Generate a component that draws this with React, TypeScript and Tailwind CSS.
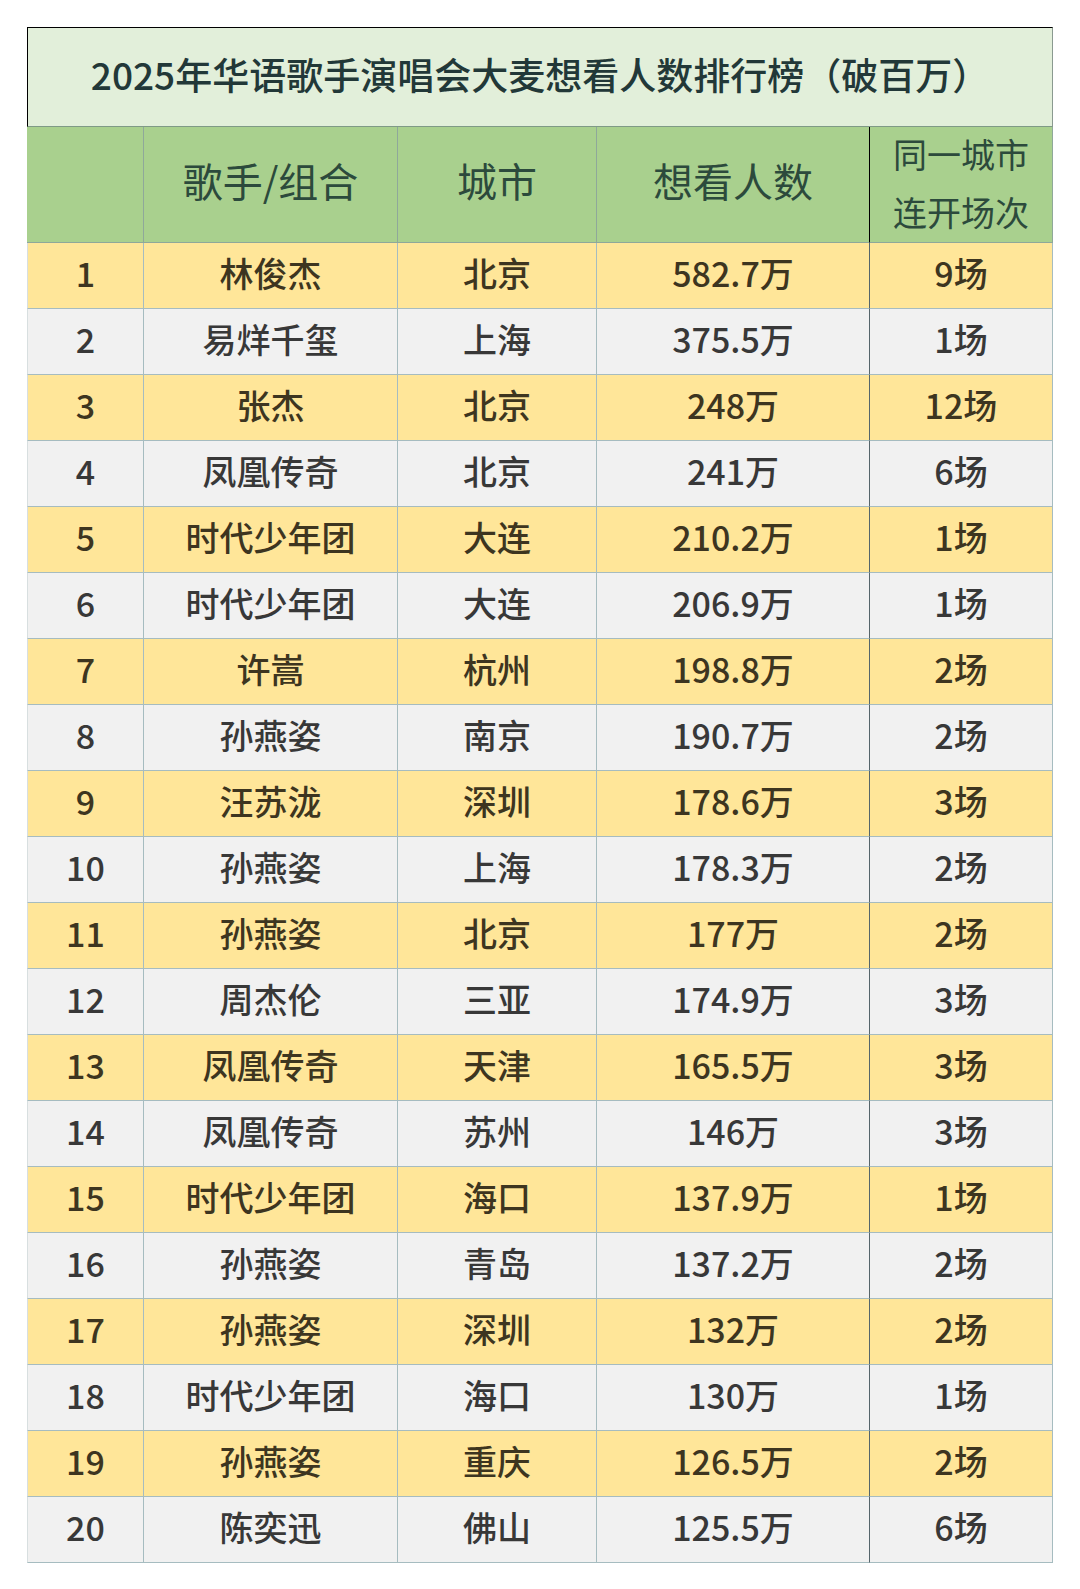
import React from "react";

const rows: [string, string, string, string, string][] = [
  ["1", "林俊杰", "北京", "582.7万", "9场"],
  ["2", "易烊千玺", "上海", "375.5万", "1场"],
  ["3", "张杰", "北京", "248万", "12场"],
  ["4", "凤凰传奇", "北京", "241万", "6场"],
  ["5", "时代少年团", "大连", "210.2万", "1场"],
  ["6", "时代少年团", "大连", "206.9万", "1场"],
  ["7", "许嵩", "杭州", "198.8万", "2场"],
  ["8", "孙燕姿", "南京", "190.7万", "2场"],
  ["9", "汪苏泷", "深圳", "178.6万", "3场"],
  ["10", "孙燕姿", "上海", "178.3万", "2场"],
  ["11", "孙燕姿", "北京", "177万", "2场"],
  ["12", "周杰伦", "三亚", "174.9万", "3场"],
  ["13", "凤凰传奇", "天津", "165.5万", "3场"],
  ["14", "凤凰传奇", "苏州", "146万", "3场"],
  ["15", "时代少年团", "海口", "137.9万", "1场"],
  ["16", "孙燕姿", "青岛", "137.2万", "2场"],
  ["17", "孙燕姿", "深圳", "132万", "2场"],
  ["18", "时代少年团", "海口", "130万", "1场"],
  ["19", "孙燕姿", "重庆", "126.5万", "2场"],
  ["20", "陈奕迅", "佛山", "125.5万", "6场"],
];

const font = { fontFamily: '"Noto Sans CJK SC", "Noto Sans", sans-serif' };

export default function App() {
  return (
    <div className="bg-white min-h-[1589px] pt-[27px] pl-[27px]" style={font}>
      <div className="w-[1026px]">
        <div className="h-[100px] pb-[4px] bg-[#e2efda] border-t border-l border-black border-r border-r-[#8a9a90] border-b border-b-[#7f9a86] flex items-center justify-center text-[37px] font-medium text-[#223838]">
          2025年华语歌手演唱会大麦想看人数排行榜（破百万）
        </div>
        <div className="grid grid-cols-[117px_254px_199px_273px_183px] grid-rows-[116px] h-[116px] bg-[#a9d08e] text-[#2c4a3c]">
          <div className="border-r border-b border-[#8fa89a]" />
          <div className="border-r border-b border-[#8fa89a] flex items-center justify-center text-[40px] leading-[48px] pb-[10px]">歌手/组合</div>
          <div className="border-r border-b border-[#8fa89a] flex items-center justify-center text-[40px] leading-[48px] pb-[10px]">城市</div>
          <div className="border-r border-b border-r-black border-b-[#8fa89a] flex items-center justify-center text-[40px] leading-[48px] pb-[10px]">想看人数</div>
          <div className="border-r border-b border-[#8fa89a] overflow-hidden flex flex-col items-center justify-center text-[34px] leading-[58px] pb-[3px]">
            <span className="shrink-0">同一城市</span>
            <span className="shrink-0">连开场次</span>
          </div>
        </div>
        {rows.map((r, i) => {
          const bg = i % 2 === 0 ? "bg-[#ffe699] text-[#3d3520]" : "bg-[#f1f1f1] text-[#383838]";
          return (
            <div key={i} className={`grid grid-cols-[117px_254px_199px_273px_183px] grid-rows-[66px] h-[66px] text-[34px] leading-[42px] font-medium ${bg}`}>
              <div className="border-l border-l-[#d8dfe0] border-r border-b border-[#a6bcc0] flex items-center justify-center pb-[6px]">{r[0]}</div>
              <div className="border-r border-b border-[#a6bcc0] flex items-center justify-center pb-[6px]">{r[1]}</div>
              <div className="border-r border-b border-[#a6bcc0] flex items-center justify-center pb-[6px]">{r[2]}</div>
              <div className="border-r border-b border-r-[#55656b] border-b-[#a6bcc0] flex items-center justify-center pb-[6px]">{r[3]}</div>
              <div className="border-r border-b border-[#a6bcc0] flex items-center justify-center pb-[6px]">{r[4]}</div>
            </div>
          );
        })}
      </div>
    </div>
  );
}
